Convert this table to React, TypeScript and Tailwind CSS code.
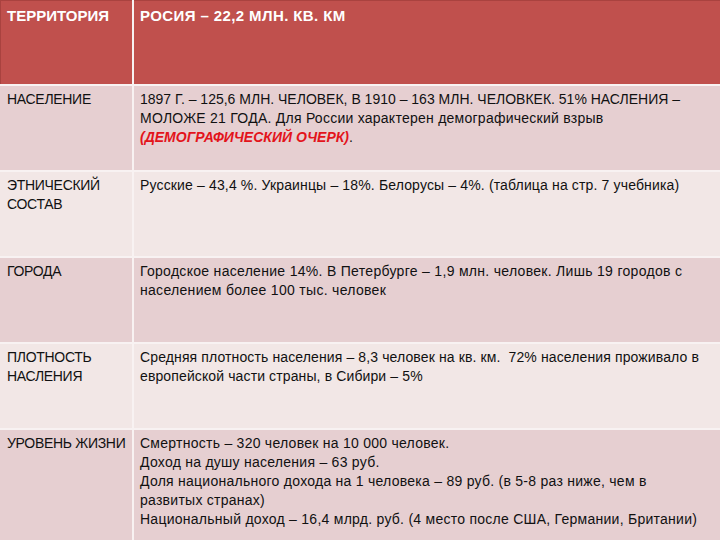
import React from "react";

const rows: { label: React.ReactNode; body: React.ReactNode; tone: string; h: string; track: string }[] = [
  {
    label: "НАСЕЛЕНИЕ",
    tone: "bg-[#e6cfd1]",
    h: "h-[84px]",
    track: "tracking-normal",
    body: (
      <>
        1897 Г. – 125,6 МЛН. ЧЕЛОВЕК, В 1910 – 163 МЛН. ЧЕЛОВКЕК. 51% НАСЛЕНИЯ –<br />
        <span className="tracking-[0.25px]">МОЛОЖЕ 21 ГОДА. Для России характерен демографический взрыв</span>
        <br />
        <span className="font-bold italic text-[#e3141b]">(ДЕМОГРАФИЧЕСКИЙ ОЧЕРК)</span>.
      </>
    ),
  },
  {
    label: (
      <>
        ЭТНИЧЕСКИЙ<br />СОСТАВ
      </>
    ),
    tone: "bg-[#f2e7e6]",
    h: "h-[84px]",
    track: "tracking-[0.15px]",
    body: <>Русские – 43,4 %. Украинцы – 18%. Белорусы – 4%. (таблица на стр. 7 учебника)</>,
  },
  {
    label: "ГОРОДА",
    tone: "bg-[#e6cfd1]",
    h: "h-[84px]",
    track: "tracking-[0.3px]",
    body: (
      <>
        Городское население 14%. В Петербурге – 1,9 млн. человек. Лишь 19 городов с<br />
        населением более 100 тыс. человек
      </>
    ),
  },
  {
    label: (
      <>
        ПЛОТНОСТЬ<br />НАСЛЕНИЯ
      </>
    ),
    tone: "bg-[#f2e7e6]",
    h: "h-[84px]",
    track: "tracking-[0.12px]",
    body: (
      <>
        Средняя плотность населения – 8,3 человек на кв. км.&nbsp; 72% населения проживало в<br />
        европейской части страны, в Сибири – 5%
      </>
    ),
  },
  {
    label: "УРОВЕНЬ ЖИЗНИ",
    tone: "bg-[#e6cfd1]",
    h: "h-[110px]",
    track: "tracking-[0.26px]",
    body: (
      <>
        Смертность – 320 человек на 10 000 человек.<br />
        Доход на душу населения – 63 руб.<br />
        Доля национального дохода на 1 человека – 89 руб. (в 5-8 раз ниже, чем в<br />
        развитых странах)<br />
        Национальный доход – 16,4 млрд. руб. (4 место после США, Германии, Британии)
      </>
    ),
  },
];

export default function App() {
  return (
    <div
      className="w-[720px] h-[540px] overflow-hidden bg-[#f8f2f2] grid grid-cols-[132px_1fr] gap-x-[2px] gap-y-[2px] text-[#111]"
      style={{ fontFamily: '"Liberation Sans", Arial, sans-serif' }}
    >
      <div className="h-[84px] bg-[#c0504d] border-t border-l border-[#a9423f] px-[6px] pt-[5px] text-white font-bold text-[15px] leading-[20px] whitespace-nowrap">
        ТЕРРИТОРИЯ
      </div>
      <div className="h-[84px] bg-[#c0504d] border-t border-[#a9423f] px-[6px] pt-[5px] text-white font-bold text-[15px] leading-[20px] tracking-[0.4px] whitespace-nowrap">
        РОСИЯ – 22,2 МЛН. КВ. КМ
      </div>
      {rows.map((r, i) => (
        <React.Fragment key={i}>
          <div className={`${r.h} ${r.tone} pl-[7px] pt-[4px] text-[14px] leading-[19px] tracking-[-0.3px] whitespace-nowrap`}>
            {r.label}
          </div>
          <div className={`${r.h} ${r.tone} ${r.track} pl-[6px] pt-[4px] text-[14px] leading-[19px] whitespace-nowrap`}>
            {r.body}
          </div>
        </React.Fragment>
      ))}
    </div>
  );
}
